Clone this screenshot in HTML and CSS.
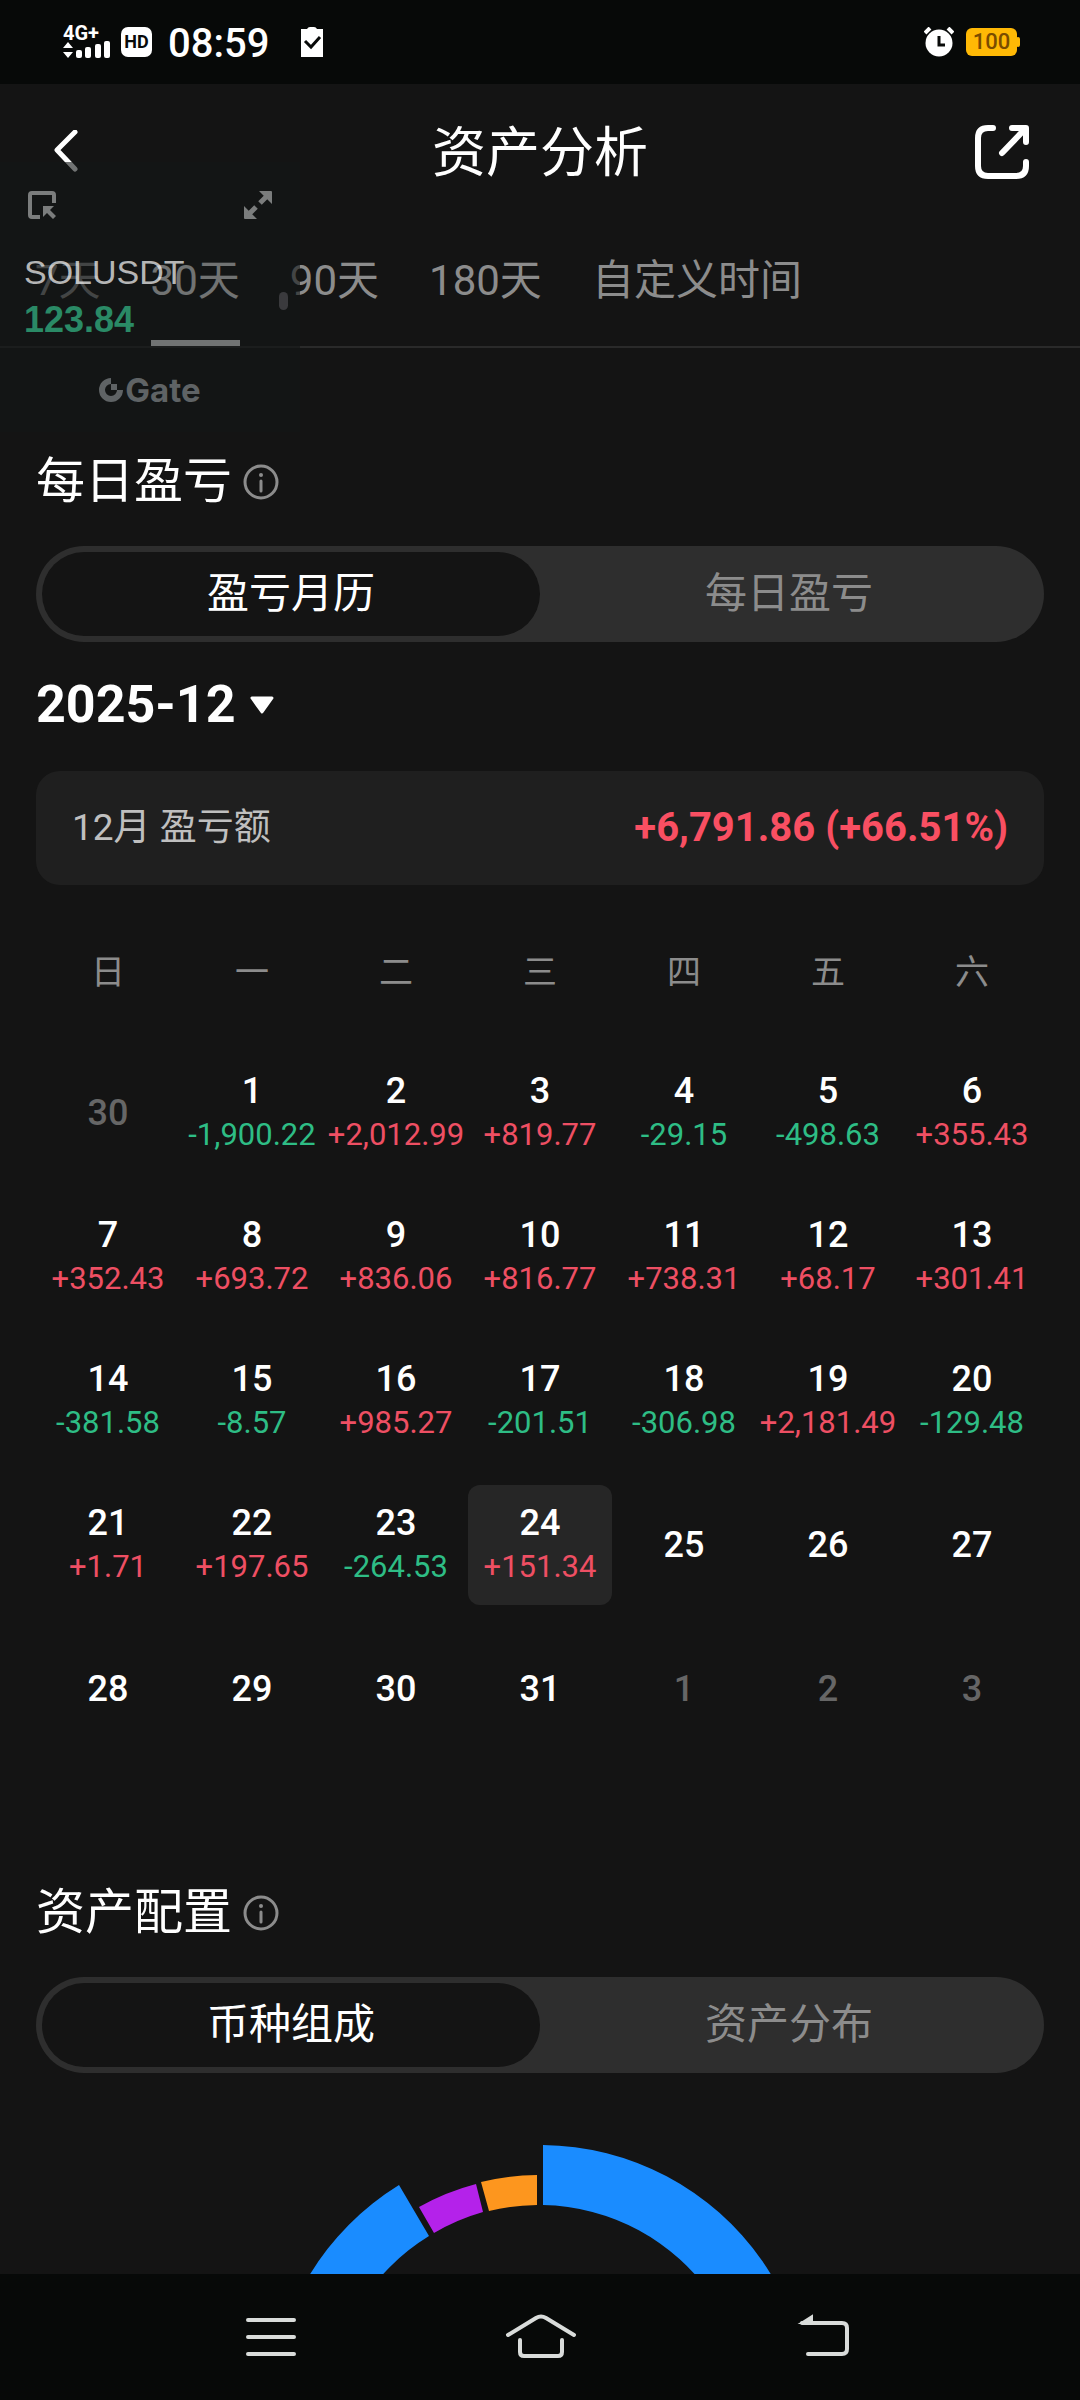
FILE: index.html
```html
<!DOCTYPE html>
<html lang="zh-CN">
<head>
  <meta charset="UTF-8">
  <meta name="viewport" content="width=device-width, initial-scale=1.0">
  <title>资产分析</title>
  <link rel="stylesheet" href="styles.css">
</head>
<body>
  <div class="statusbar">
    <div class="signal">
      <span class="network">4G+</span>
      <svg width="48" height="18" viewBox="0 0 48 18" fill="#fff">
        <path d="M0 7l5-6 5 6zM0 11h10l-5 6z"/>
        <rect x="13" y="9" width="6" height="8" rx="2"/>
        <rect x="22" y="6" width="6" height="11" rx="2"/>
        <rect x="32" y="3" width="6" height="14" rx="2"/>
        <rect x="41" y="0" width="6" height="17" rx="2"/>
      </svg>
    </div>
    <span class="hd">HD</span>
    <span class="clock">08:59</span>
    <svg class="clipboard" width="22" height="30" viewBox="0 0 22 30">
      <path d="M0 2h6q1-2 3-2h4q2 0 3 2h6v28H0z" fill="#fff"/>
      <path d="M4 14l6 6 9-10" fill="none" stroke="#080a09" stroke-width="3"/>
    </svg>
    <svg class="alarm" width="30" height="30" viewBox="0 0 30 30">
      <circle cx="15" cy="16" r="13.5" fill="#fff"/>
      <path d="M1 6l5-5M29 6l-5-5" stroke="#fff" stroke-width="4"/>
      <path d="M15 9v9h6" fill="none" stroke="#080a09" stroke-width="3"/>
    </svg>
    <span class="battery">100</span>
  </div>

  <header class="header">
    <button class="icon-btn" aria-label="返回">
      <svg width="30" height="44" viewBox="0 0 30 44" fill="none" stroke="#fff" stroke-width="5" stroke-linecap="round" stroke-linejoin="round">
        <path d="M24 2L6 20l18 19"/>
      </svg>
    </button>
    <h1>资产分析</h1>
    <button class="icon-btn" aria-label="分享">
      <svg width="54" height="54" viewBox="0 0 54 54" fill="none" stroke="#fff" stroke-width="6" stroke-linecap="round" stroke-linejoin="round">
        <path d="M18 3h-5Q3 3 3 13v28q0 10 10 10h28q10 0 10-10v-4M37 3h14v14M50 4L27 28"/>
      </svg>
    </button>
  </header>

  <nav class="tabs">
    <button>7天</button>
    <button class="active">30天</button>
    <button>90天</button>
    <button>180天</button>
    <button>自定义时间</button>
  </nav>

  <main>
    <section class="pnl">
      <div class="section-title">
        <h2>每日盈亏</h2>
        <svg width="36" height="36" viewBox="0 0 36 36">
          <circle cx="18" cy="18" r="16" fill="none" stroke="#8c8c8c" stroke-width="3"/>
          <circle cx="18" cy="11" r="2" fill="#8c8c8c"/>
          <path d="M18 17v10" stroke="#8c8c8c" stroke-width="3" stroke-linecap="round"/>
        </svg>
      </div>
      <div class="segment">
        <button class="active">盈亏月历</button>
        <button>每日盈亏</button>
      </div>

      <div class="month">
        <select aria-label="月份">
          <option>2025-12</option>
        </select>
        <svg width="24" height="20" viewBox="0 0 24 20">
          <path d="M2 3h20l-10 14z" fill="#fff" stroke="#fff" stroke-width="3" stroke-linejoin="round"/>
        </svg>
      </div>

      <div class="summary">
        <span>12月 盈亏额</span>
        <strong>+6,791.86 (+66.51%)</strong>
      </div>

      <table class="calendar">
        <thead>
          <tr><th>日</th><th>一</th><th>二</th><th>三</th><th>四</th><th>五</th><th>六</th></tr>
        </thead>
        <tbody>
          <tr>
            <td><button class="other">30</button></td>
            <td><button>1<span class="down">-1,900.22</span></button></td>
            <td><button>2<span class="up">+2,012.99</span></button></td>
            <td><button>3<span class="up">+819.77</span></button></td>
            <td><button>4<span class="down">-29.15</span></button></td>
            <td><button>5<span class="down">-498.63</span></button></td>
            <td><button>6<span class="up">+355.43</span></button></td>
          </tr>
          <tr>
            <td><button>7<span class="up">+352.43</span></button></td>
            <td><button>8<span class="up">+693.72</span></button></td>
            <td><button>9<span class="up">+836.06</span></button></td>
            <td><button>10<span class="up">+816.77</span></button></td>
            <td><button>11<span class="up">+738.31</span></button></td>
            <td><button>12<span class="up">+68.17</span></button></td>
            <td><button>13<span class="up">+301.41</span></button></td>
          </tr>
          <tr>
            <td><button>14<span class="down">-381.58</span></button></td>
            <td><button>15<span class="down">-8.57</span></button></td>
            <td><button>16<span class="up">+985.27</span></button></td>
            <td><button>17<span class="down">-201.51</span></button></td>
            <td><button>18<span class="down">-306.98</span></button></td>
            <td><button>19<span class="up">+2,181.49</span></button></td>
            <td><button>20<span class="down">-129.48</span></button></td>
          </tr>
          <tr>
            <td><button>21<span class="up">+1.71</span></button></td>
            <td><button>22<span class="up">+197.65</span></button></td>
            <td><button>23<span class="down">-264.53</span></button></td>
            <td><button class="today">24<span class="up">+151.34</span></button></td>
            <td><button>25</button></td>
            <td><button>26</button></td>
            <td><button>27</button></td>
          </tr>
          <tr>
            <td><button>28</button></td>
            <td><button>29</button></td>
            <td><button>30</button></td>
            <td><button>31</button></td>
            <td><button class="other">1</button></td>
            <td><button class="other">2</button></td>
            <td><button class="other">3</button></td>
          </tr>
        </tbody>
      </table>
    </section>

    <section class="allocation">
      <div class="section-title">
        <h2>资产配置</h2>
        <svg width="36" height="36" viewBox="0 0 36 36">
          <circle cx="18" cy="18" r="16" fill="none" stroke="#8c8c8c" stroke-width="3"/>
          <circle cx="18" cy="11" r="2" fill="#8c8c8c"/>
          <path d="M18 17v10" stroke="#8c8c8c" stroke-width="3" stroke-linecap="round"/>
        </svg>
      </div>
      <div class="segment">
        <button class="active">币种组成</button>
        <button>资产分布</button>
      </div>
      <div class="chart">
        <svg width="540" height="540" viewBox="0 0 540 540">
          <path d="M273 0A270 270 0 1 1 129 40L159 91A210 210 0 1 0 273 60z" fill="#1a8cff"/>
          <path d="M149 62A240 240 0 0 1 206 39L213 67A210 210 0 0 0 164 88z" fill="#b422ea"/>
          <path d="M211 37A240 240 0 0 1 267 30V60A210 210 0 0 0 219 66z" fill="#fd961e"/>
        </svg>
      </div>
    </section>
  </main>

  <!-- floating price window -->
  <aside class="floating">
    <div class="float-tools">
      <svg width="28" height="28" viewBox="0 0 28 28">
        <path d="M26 12V4q0-2-2-2H4Q2 2 2 4v20q0 2 2 2h8" fill="none" stroke="#7b7d7d" stroke-width="4"/>
        <path d="M15 15h11l-4 4 6 6-3 3-6-6-4 4z" fill="#7b7d7d"/>
      </svg>
      <svg width="28" height="28" viewBox="0 0 28 28" fill="#7b7d7d">
        <path d="M15 0h12q1 0 1 1v12zM0 15l13 13H1q-1 0-1-1z"/>
        <path d="M23 5l-7 7M5 23l7-7" stroke="#7b7d7d" stroke-width="5"/>
      </svg>
    </div>
    <div class="float-symbol">SOLUSDT</div>
    <div class="float-price">123.84</div>
    <div class="float-logo">
      <svg width="24" height="24" viewBox="0 0 24 24">
        <path d="M12 3A9 9 0 1 0 21 12" fill="none" stroke="#5f6365" stroke-width="6"/>
        <path d="M12 6h6v6h-6z" fill="#5f6365"/>
      </svg>
      <span>Gate</span>
    </div>
    <i class="float-handle"></i>
  </aside>

  <footer class="navbar">
    <button aria-label="菜单">
      <svg width="100" height="48" viewBox="0 0 100 48" stroke="#d9dcda" stroke-width="4" stroke-linecap="round">
        <path d="M27 7h46M27 24h46M27 41h46"/>
      </svg>
    </button>
    <button aria-label="主页">
      <svg width="100" height="48" viewBox="0 0 100 48" fill="none" stroke="#d9dcda" stroke-width="4" stroke-linecap="round" stroke-linejoin="round">
        <path d="M18 22L46 5q5-3 10 0l28 17M30 27v12q0 4 4 4h34q4 0 4-4V27"/>
      </svg>
    </button>
    <button aria-label="后退">
      <svg width="100" height="48" viewBox="0 0 100 48" fill="none" stroke="#d9dcda" stroke-width="4" stroke-linecap="round">
        <path d="M43 10h40q5 0 5 5v21q0 5-5 5H49"/>
        <path d="M42 10l11-7v7z" fill="#d9dcda" stroke-width="2"/>
      </svg>
    </button>
  </footer>
</body>
</html>
```
FILE: styles.css
```css
* {
  box-sizing: border-box;
}
body {
  position: relative;
  margin: 0;
  background-color: #141414;
  color: #fff;
  font-family: Roboto, "Noto Sans CJK SC", sans-serif;
}
button, select {
  margin: 0;
  padding: 0;
  border: none;
  background: none;
  color: inherit;
  font-family: inherit;
  cursor: pointer;
}
svg {
  display: block;
  flex-shrink: 0;
}
h1, h2 {
  margin: 0;
  font-weight: 400;
}

/* system status bar */
.statusbar {
  display: flex;
  align-items: center;
  height: 84px;
  padding: 0 63px;
  background-color: #070908;
}
.signal {
  width: 48px;
}
.network {
  display: block;
  font-size: 20px;
  line-height: 16px;
  font-weight: 700;
}
.hd {
  margin-left: 10px;
  width: 31px;
  border-radius: 7px;
  background-color: #fff;
  color: #080a09;
  font-size: 18px;
  line-height: 30px;
  font-weight: 700;
  text-align: center;
}
.clock {
  margin-left: 16px;
  padding-top: 4px;
  font-size: 40px;
  line-height: 40px;
  font-weight: 500;
}
.clipboard {
  margin-left: 32px;
}
.alarm {
  margin-left: auto;
}
.battery {
  position: relative;
  margin-left: 12px;
  width: 51px;
  border-radius: 6px;
  background-color: #ffb905;
  color: #7a4c00;
  font-size: 22px;
  line-height: 28px;
  font-weight: 500;
  text-align: center;
}
.battery::after {
  content: "";
  position: absolute;
  right: -3px;
  top: 9px;
  width: 4px;
  height: 10px;
  border-radius: 2px;
  background-color: #ffb905;
}

.header {
  display: flex;
  align-items: center;
  justify-content: space-between;
  height: 136px;
  padding: 0 51px;
}
.header h1 {
  padding-top: 4px;
  font-size: 54px;
  line-height: 60px;
}
.icon-btn {
  display: flex;
  width: 54px;
}

.tabs {
  display: flex;
  gap: 50px;
  padding: 0 35px;
  border-bottom: 2px solid #2a2a2a;
}
.tabs button {
  padding-top: 2px;
  border-bottom: 6px solid transparent;
  color: #8c8c8c;
  font-size: 42px;
  line-height: 118px;
}
.tabs .active {
  border-color: #fff;
  color: #fff;
}

.pnl {
  padding: 104px 36px 0;
}
.allocation {
  padding: 110px 36px 0;
}
.section-title {
  display: flex;
  align-items: center;
  gap: 11px;
}
.section-title h2 {
  font-size: 49px;
  line-height: 60px;
}
.segment {
  display: flex;
  margin-top: 34px;
  padding: 6px;
  border-radius: 48px;
  background-color: #2e2e2e;
}
.segment button {
  flex: 1;
  border-radius: 42px;
  color: #8c8c8c;
  font-size: 42px;
  line-height: 84px;
}
.segment .active {
  background-color: #141414;
  color: #fff;
}

.month {
  display: flex;
  align-items: center;
  gap: 14px;
  margin-top: 33px;
}
.month select {
  appearance: none;
  font-size: 52px;
  line-height: 60px;
  font-weight: 700;
}
.summary {
  display: flex;
  align-items: center;
  justify-content: space-between;
  margin-top: 36px;
  padding: 0 36px;
  border-radius: 24px;
  background-color: #1f1f1f;
  color: #bfbfbf;
  font-size: 37px;
  line-height: 114px;
}
.summary strong {
  color: #f94f62;
  font-size: 40px;
}

.calendar {
  width: 100%;
  table-layout: fixed;
  border-collapse: collapse;
}
.calendar th {
  height: 168px;
  padding: 0;
  color: #8c8c8c;
  font-size: 34px;
  font-weight: 400;
}
.calendar td {
  height: 144px;
  padding: 0;
  vertical-align: top;
}
.calendar button {
  display: block;
  width: 100%;
  height: 120px;
  border-radius: 12px;
  font-size: 36px;
  line-height: 44px;
  font-weight: 500;
  white-space: nowrap;
}
.calendar span {
  display: block;
  font-size: 31px;
  font-weight: 400;
}
.calendar .other {
  color: #666;
}
.calendar .today {
  background-color: #262626;
}
.up {
  color: #ee4f63; /* red is a gain here */
}
.down {
  color: #2ebd85;
}

/* only the top of the donut shows above the nav bar */
.chart {
  display: flex;
  justify-content: center;
  height: 129px;
  margin-top: 72px;
  overflow: hidden;
}

.floating {
  position: absolute;
  top: 162px;
  left: 0;
  width: 300px;
  height: 270px;
  padding: 29px 24px 0;
  background-color: rgba(18, 22, 21, 0.6);
}
.float-tools {
  display: flex;
  justify-content: space-between;
  padding: 0 4px;
}
.float-symbol {
  margin-top: 33px;
  color: rgba(255, 255, 255, 0.7);
  font-family: "Liberation Sans", Arial, sans-serif;
  font-size: 34px;
  line-height: 40px;
}
.float-price {
  margin-top: 8px;
  color: #2a8a66;
  font-family: "Liberation Sans", Arial, sans-serif;
  font-size: 36px;
  line-height: 40px;
  font-weight: 700;
}
.float-logo {
  display: flex;
  align-items: center;
  justify-content: center;
  gap: 2px;
  margin-top: 30px;
  color: #5f6365;
  font-family: Inter, sans-serif;
  font-size: 33px;
  line-height: 40px;
  font-weight: 700;
}
.float-handle {
  position: absolute;
  top: 130px;
  right: 12px;
  width: 9px;
  height: 18px;
  border-radius: 5px;
  background-color: #3a3a3d;
}

.navbar {
  display: flex;
  align-items: center;
  justify-content: space-between;
  height: 126px;
  padding: 0 221px;
  background-color: #070908;
}
```
